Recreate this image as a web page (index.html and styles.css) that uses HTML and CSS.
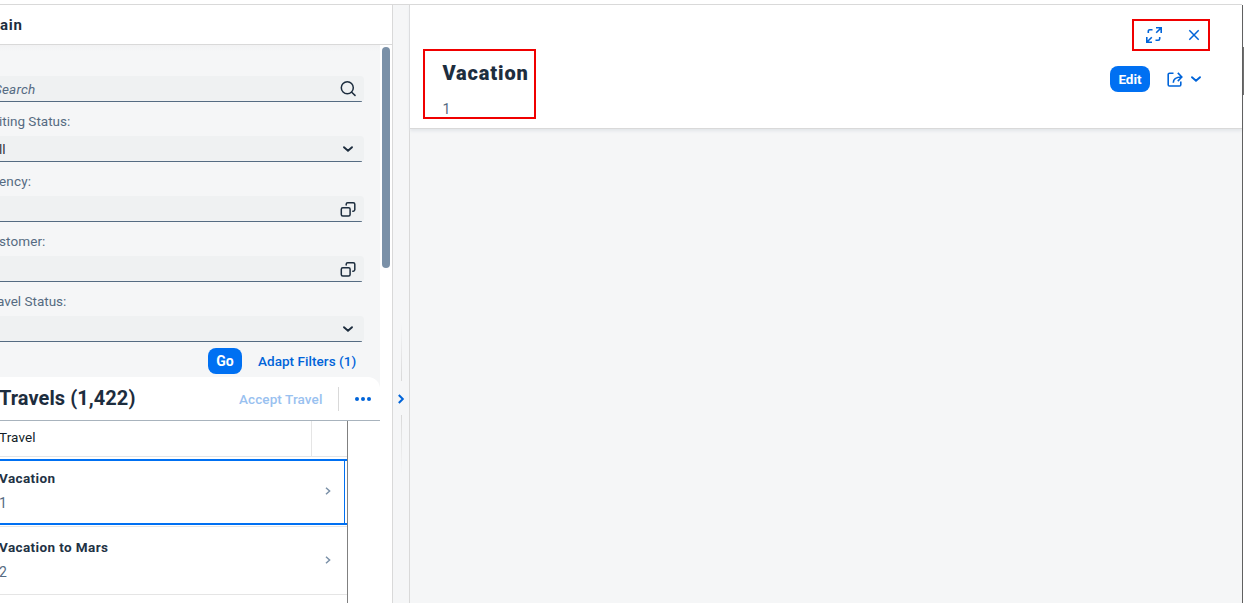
FILE: index.html
```html
<!DOCTYPE html>
<html lang="en">
<head>
<meta charset="utf-8">
<title>Travels</title>
<link rel="stylesheet" href="styles.css">
</head>
<body>
<svg class="defs" width="0" height="0">
  <symbol id="down" viewBox="0 0 16 16"><path d="M4 6.200 8 9.700l4-3.500" fill="none" stroke="currentColor" stroke-width="1.900" stroke-linecap="round"/></symbol>
  <symbol id="help" viewBox="0 0 16 16"><g fill="none" stroke="currentColor" stroke-width="1.500"><rect x="1.300" y="6.700" width="8.800" height="8.300" rx="1.500"/><path d="M6.200 4V3.200A1.500 1.500 0 0 1 7.700 1.700H13.300A1.500 1.500 0 0 1 14.800 3.200V8.800A1.500 1.500 0 0 1 13.300 10.200H12.800" stroke-linecap="round"/></g></symbol>
  <symbol id="right" viewBox="0 0 8 12"><path d="m2 2.800 3.600 3.200L2 9.200" fill="none" stroke="currentColor" stroke-width="1.500"/></symbol>
</svg>
<div class="app">
  <section class="list">
    <header class="bar"><span>ain</span></header>
    <div class="body">
      <main class="content">
        <form class="filters">
          <div class="field first"><span class="ph">Search</span><svg width="16" height="16" viewBox="0 0 16 16"><g fill="none" stroke="currentColor" stroke-width="1.500" stroke-linecap="round"><circle cx="7.300" cy="6.800" r="6"/><path d="m11.700 11.300 3.300 3.100"/></g></svg></div>
          <label class="l1">iting Status:</label>
          <div class="field"><span class="val">ll</span><svg width="16" height="16"><use href="#down"/></svg></div>
          <label class="l2">ency:</label>
          <div class="field"><span></span><svg width="16" height="16"><use href="#help"/></svg></div>
          <label class="l3">stomer:</label>
          <div class="field"><span></span><svg width="16" height="16"><use href="#help"/></svg></div>
          <label class="l4">avel Status:</label>
          <div class="field"><span></span><svg width="16" height="16"><use href="#down"/></svg></div>
          <div class="actions"><b class="go">Go</b><span class="adapt">Adapt Filters (1)</span></div>
        </form>
        <div class="toolbar"><h2>Travels (1,422)</h2><span class="accept">Accept Travel</span><i class="sep"></i><span class="more"><i></i><i></i><i></i></span></div>
        <div class="table">
          <div class="thead"><span>Travel</span></div>
          <div class="row selected"><div><b>Vacation</b><span>1</span></div><svg width="8" height="12"><use href="#right"/></svg></div>
          <div class="row"><div><b>Vacation to Mars</b><span>2</span></div><svg width="8" height="12"><use href="#right"/></svg></div>
          <div class="row"></div>
        </div>
      </main>
      <div class="track"><div class="thumb"></div></div>
    </div>
  </section>
  <div class="splitter"><i class="up"></i><svg width="8" height="12" viewBox="0 0 8 12"><path d="m1.800 2 4 4-4 4" fill="none" stroke="#0064d9" stroke-width="2"/></svg><i class="down"></i></div>
  <section class="detail">
    <header class="object">
      <div class="mark titlebox"><h1>Vacation</h1><span>1</span></div>
      <div class="controls">
        <div class="mark windowbox">
          <svg width="16" height="16" viewBox="0 0 16 16"><g fill="none" stroke="currentColor" stroke-width="1.600"><path d="M10 .8h5.200V6M15 1 10.200 5.800M.8 10v5.200H6M1 15l4.800-4.800"/><path d="M2.300 6V4.200a1.500 1.500 0 0 1 1.500-1.500H6.500M9.500 13.300h2.700a1.500 1.500 0 0 0 1.500-1.500V10"/></g></svg>
          <svg class="close" width="12" height="12" viewBox="0 0 12 12"><path d="m1.300 1.300 9.400 9.400m0-9.400-9.400 9.400" fill="none" stroke="currentColor" stroke-width="1.500"/></svg>
        </div>
        <div class="buttons"><b class="edit">Edit</b>
          <svg class="share" width="16" height="16" viewBox="0 0 16 16"><g fill="none" stroke="currentColor" stroke-width="1.600"><path d="M6.500 2.200H2.500A1.300 1.300 0 0 0 1.200 3.500V13.700A1.300 1.300 0 0 0 2.500 15H12.500A1.300 1.300 0 0 0 13.800 13.700V10.500"/><path d="M6.300 11.800c0-3.800 2-5.800 8.200-5.800M10.800 1.900l4 4.100-4 4.100"/></g></svg>
          <svg class="arrow" width="16" height="16"><use href="#down"/></svg>
        </div>
      </div>
    </header>
  </section>
  <div class="edge"><div></div></div>
</div>
</body>
</html>
```
FILE: styles.css
```css
* { box-sizing: border-box; }
body { margin: 0; background: #fff; font: 13.5px/18px Roboto, "Liberation Sans", sans-serif; color: #1d2d3e; overflow: hidden; }
.defs { display: block; height: 0; }
svg { display: block; flex: none; }
h1, h2 { margin: 0; font-weight: 700; }
.app { display: flex; height: 603px; padding-top: 4px; background: linear-gradient(#d9d9d9, #d9d9d9) 0 4px / 1242px 1px no-repeat, #fff; }
.list { width: 392px; margin-top: 1px; display: flex; flex-direction: column; overflow: hidden; }
.bar { height: 40px; flex: none; border-bottom: 1px solid #d9d9d9; font-weight: 700; font-size: 15px; line-height: 40px; letter-spacing: .8px; }
.body { display: flex; flex: 1; min-height: 0; }
.content { width: 380px; background: #f5f6f7; overflow: hidden; }
.filters { height: 332px; padding-top: 31px; background: linear-gradient(#f2f2f3, #f5f6f7 6px); }
.field { width: 364px; height: 26px; padding: 0 8px 1px 0; display: flex; align-items: center; justify-content: space-between; border-radius: 0 4px 4px 0; background: linear-gradient(#556b82, #556b82) 0 100% / 362px 1px no-repeat, #eff1f2; }
.ph { color: #556b82; font-style: italic; letter-spacing: .2px; margin-left: -6px; }
.val { color: #32363a; margin-left: -1px; }
label { display: block; height: 34px; padding-top: 10px; color: #556b82; white-space: nowrap; }
.l1 { margin-left: -1px; }
.l2 { margin-left: -1px; letter-spacing: .2px; }
.l3 { margin-left: -1px; letter-spacing: .1px; }
.l4 { margin-left: -3px; }
.actions { display: flex; height: 26px; margin: 6px 0 0 208px; align-items: center; }
.go, .edit { background: #0070f2; color: #fff; border-radius: 8px; height: 26px; line-height: 26px; text-align: center; }
.go { width: 34px; font-size: 14px; }
.adapt { margin-left: 16px; color: #0064d9; font-weight: 500; letter-spacing: .05px; }
.toolbar { height: 44px; display: flex; align-items: center; background: #fff; border-radius: 0 12px 0 0; border-bottom: 1px solid #a8b3bd; }
.toolbar h2 { width: 239px; font-size: 20px; line-height: 22px; margin-top: -2px; white-space: nowrap; text-indent: -1px; letter-spacing: .07px; }
.accept { width: 99px; color: #99c1f0; font-weight: 500; letter-spacing: .1px; }
.sep { width: 1px; height: 24px; background: #d9d9d9; }
.more { display: flex; gap: 2px; margin-left: 16px; }
.more i { width: 4px; height: 4px; border-radius: 50%; background: #0064d9; }
.table { height: 182px; background: linear-gradient(#808080, #808080) 347px 0 / 1px 100% no-repeat, #fff; }
.thead { width: 347px; height: 36px; border-bottom: 1px solid #e5e5e5; background: linear-gradient(#e5e5e5, #e5e5e5) 311px 0 / 1px 100% no-repeat; line-height: 32px; color: #131e29; text-indent: -1px; letter-spacing: .1px; }
.row { width: 347px; height: 68px; display: flex; justify-content: space-between; padding: 11px 15px 0 0; border-bottom: 1px solid #e5e5e5; color: #7b91a8; }
.row svg { margin-top: 16px; }
.row div { display: flex; flex-direction: column; gap: 7px; margin-left: -1px; }
.row b { color: #223244; white-space: nowrap; letter-spacing: .4px; }
.row span { color: #556b82; font-size: 14px; }
.selected { height: 70px; padding-top: 12px; background: linear-gradient(#0070f2, #0070f2) 0 2px / 347px 2px no-repeat, linear-gradient(#0070f2, #0070f2) 0 66px / 347px 2px no-repeat, linear-gradient(#0070f2, #0070f2) 344px 2px / 1px 66px no-repeat; }
.track { width: 12px; padding: 2px; background: #fff; }
.thumb { width: 8px; height: 221px; border-radius: 4px; background: #7b91a8; }
.splitter { width: 18px; margin-top: 1px; border: solid #d9d9d9; border-width: 0 1px; background: #f5f6f7; display: flex; flex-direction: column; align-items: center; padding-top: 316px; }
.splitter i { width: 1px; height: 60px; }
.splitter svg { margin: 12px 0 10px; }
.up { background: linear-gradient(transparent, #d9d9d9); }
.down { background: linear-gradient(#d9d9d9, transparent); }
.detail { width: 832px; margin-top: 1px; background: #f5f6f7; }
.object { height: 124px; display: flex; justify-content: space-between; background: #fff; border-bottom: 1px solid #d9d9d9; box-shadow: 0 2px 3px #e2e5e9; padding: 14px 32px 0 13px; }
.mark { border: 2px solid #f00000; }
.titlebox { width: 113px; height: 70px; margin-top: 30px; padding: 10px 0 0 17.500px; }
.titlebox h1 { font-size: 20px; line-height: 24px; font-weight: 900; letter-spacing: .85px; }
.titlebox span { display: block; margin-top: 15px; color: #556b82; font-size: 14px; }
.controls { color: #0064d9; display: flex; flex-direction: column; align-items: flex-end; gap: 15px; }
.windowbox { width: 78px; height: 32px; display: flex; align-items: center; padding-left: 12px; }
.close { margin-left: 26px; }
.buttons { display: flex; align-items: center; padding-right: 6px; }
.edit { width: 40px; }
.share { margin-left: 17px; }
.arrow { margin-left: 5px; }
.edge { width: 2px; margin-top: 1px; border-left: 1px solid #606060; padding-top: 42px; }
.edge div { width: 1px; height: 48px; background: #707070; }
```
